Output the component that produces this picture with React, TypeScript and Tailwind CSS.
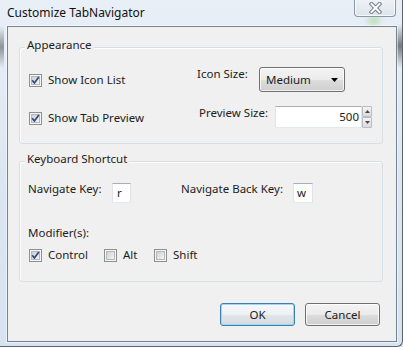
import React from "react";

function Check({ checked }: { checked?: boolean }) {
  return (
    <svg width="13" height="13" viewBox="0 0 13 13" className="shrink-0">
      <defs>
        <linearGradient id="cbg" x1="0" y1="0" x2="1" y2="1">
          <stop offset="0" stopColor="#c9cdd3" />
          <stop offset="1" stopColor="#f8f8f8" />
        </linearGradient>
      </defs>
      <rect x="0.5" y="0.5" width="12" height="12" fill="#f6f6f6" stroke="#8e8f8f" />
      <rect x="2.5" y="2.5" width="8" height="8" fill="url(#cbg)" stroke="#b4b8bd" />
      {checked && (
        <path d="M3.2 6.3 L5.4 9 L9.8 3" fill="none" stroke="#33487a" strokeWidth="1.7" strokeLinejoin="round" />
      )}
    </svg>
  );
}

function CheckItem({ label, checked }: { label: string; checked?: boolean }) {
  return (
    <div className="flex items-center gap-[6px]">
      <Check checked={checked} />
      <span>{label}</span>
    </div>
  );
}

export default function App() {
  return (
    <div className="relative w-[403px] h-[347px] overflow-hidden bg-gradient-to-b from-[#e9eff7] via-[#dce6f2] to-[#d7e3f1] font-['Noto_Sans',sans-serif] text-[11.5px] leading-[16px] text-[#1c1c1c]">
      {/* glass streaks on frame edges */}
      <div className="absolute left-0 top-[26px] w-[4px] h-[42px] bg-gradient-to-b from-transparent via-[#8d939a] to-transparent" />
      <div className="absolute right-0 top-[24px] w-[6px] h-[44px] bg-gradient-to-b from-transparent via-[#737980] to-transparent" />
      <div className="absolute left-[368px] top-[16px] w-[12px] h-[9px] rounded-full bg-[#9ad487] blur-[3px] opacity-60" />

      {/* title bar */}
      <div className="relative flex h-[26px] items-start">
        <div className="pl-[7px] pt-[5px] text-[12px] leading-[16px] text-[#111]">Customize TabNavigator</div>
        <div className="ml-auto mr-[7px] -mt-[2px] flex h-[19px] w-[42px] items-center justify-center rounded-b-[4px] border border-t-0 border-[#8c97a5] bg-gradient-to-b from-[#f1f4f8] to-[#dde4ec] shadow-[inset_0_0_0_1px_rgba(255,255,255,0.7)]">
          <svg width="13" height="12" viewBox="0 0 13 12" className="mt-[1px]">
            <path d="M2.5 2 L10.5 10 M10.5 2 L2.5 10" stroke="#6f7a88" strokeWidth="4" strokeLinecap="square" />
            <path d="M2.5 2 L10.5 10 M10.5 2 L2.5 10" stroke="#ffffff" strokeWidth="2" strokeLinecap="square" />
          </svg>
        </div>
      </div>

      {/* client area */}
      <div className="relative ml-[7px] flex h-[316px] w-[390px] flex-col border border-[#76838f] bg-[#f0f0f0] shadow-[0_0_0_1px_rgba(255,255,255,0.55)]">
        {/* Appearance group */}
        <div className="relative ml-[11px] mt-[20px] h-[97px] w-[364px] rounded-[3px] border border-[#d5dfe5] shadow-[inset_1px_1px_0_#ffffff]">
          <span className="absolute left-[5px] top-[-11px] bg-[#f0f0f0] px-[2px]">Appearance</span>
          <div className="flex flex-col pl-[9px] pt-[19px]">
            <div className="flex h-[25px] items-start">
              <div className="mt-[5px] w-[168px]">
                <CheckItem label="Show Icon List" checked />
              </div>
              <div className="-mt-[1px] w-[62px]">Icon Size:</div>
              <div className="flex h-[25px] w-[86px] items-center justify-between rounded-[3px] border border-[#707070] bg-[linear-gradient(to_bottom,#f3f3f3_0%,#ebebeb_50%,#dddddd_51%,#cfcfcf_100%)] pl-[6px] pr-[6px] shadow-[inset_0_0_0_1px_rgba(255,255,255,0.75)]">
                <span>Medium</span>
                <svg width="7" height="4" viewBox="0 0 7 4">
                  <path d="M0 0 H7 L3.5 4 Z" fill="#000" />
                </svg>
              </div>
            </div>
            <div className="mt-[14px] flex h-[22px] items-start">
              <div className="mt-[4px] w-[170px]">
                <CheckItem label="Show Tab Preview" checked />
              </div>
              <div className="-mt-[1px] w-[76px]">Preview Size:</div>
              <div className="flex h-[22px] w-[87px] items-center justify-end border border-[#abadb3] border-b-[#e3e9ef] border-l-[#e2e3ea] border-r-[#e2e3ea] bg-white pr-[2px]">
                500
              </div>
              <div className="flex h-[22px] w-[10px] flex-col">
                <div className="flex h-[11px] items-center justify-center rounded-[1px] border border-[#b9bcc0] bg-gradient-to-b from-[#f4f4f4] to-[#dcdcdc]">
                  <svg width="5" height="3" viewBox="0 0 5 3">
                    <path d="M0 3 H5 L2.5 0 Z" fill="#4a4a4a" />
                  </svg>
                </div>
                <div className="flex h-[11px] items-center justify-center rounded-[1px] border border-[#b9bcc0] bg-gradient-to-b from-[#f4f4f4] to-[#dcdcdc]">
                  <svg width="5" height="3" viewBox="0 0 5 3">
                    <path d="M0 0 H5 L2.5 3 Z" fill="#4a4a4a" />
                  </svg>
                </div>
              </div>
            </div>
          </div>
        </div>

        {/* Keyboard Shortcut group */}
        <div className="relative ml-[11px] mt-[17px] h-[121px] w-[364px] rounded-[3px] border border-[#d5dfe5] shadow-[inset_1px_1px_0_#ffffff]">
          <span className="absolute left-[5px] top-[-11px] bg-[#f0f0f0] px-[2px]">Keyboard Shortcut</span>
          <div className="flex flex-col pt-[19px]">
            <div className="flex items-start pl-[8px]">
              <div className="w-[84px]">Navigate Key:</div>
              <div className="mt-[2px] flex h-[20px] w-[19px] items-center border border-[#abadb3] border-b-[#e3e9ef] border-l-[#e2e3ea] border-r-[#e2e3ea] bg-white pl-[4px]">
                r
              </div>
              <div className="ml-[50px] w-[112px]">Navigate Back Key:</div>
              <div className="mt-[2px] flex h-[20px] w-[20px] items-center border border-[#abadb3] border-b-[#e3e9ef] border-l-[#e2e3ea] border-r-[#e2e3ea] bg-white pl-[3px]">
                w
              </div>
            </div>
            <div className="mt-[22px] pl-[8px]">Modifier(s):</div>
            <div className="mt-[6px] flex h-[16px] items-center pl-[9px]">
              <div className="w-[75px]">
                <CheckItem label="Control" checked />
              </div>
              <div className="w-[50px]">
                <CheckItem label="Alt" />
              </div>
              <div>
                <CheckItem label="Shift" />
              </div>
            </div>
          </div>
        </div>

        {/* buttons */}
        <div className="mt-[21px] flex justify-end gap-[10px] pr-[16px]">
          <button className="flex h-[23px] w-[75px] items-center justify-center rounded-[3px] border border-[#3c7fb1] bg-[linear-gradient(to_bottom,#f6f8fa_0%,#eef1f4_50%,#e2e6ea_51%,#d6dbe0_100%)] shadow-[inset_0_0_0_1px_#9fd8f5]">
            OK
          </button>
          <button className="flex h-[23px] w-[75px] items-center justify-center rounded-[3px] border border-[#707070] bg-[linear-gradient(to_bottom,#f3f3f3_0%,#ebebeb_50%,#dddddd_51%,#cfcfcf_100%)] shadow-[inset_0_0_0_1px_rgba(255,255,255,0.75)]">
            Cancel
          </button>
        </div>
      </div>

      {/* outer window edge */}
      <div className="pointer-events-none absolute inset-0 rounded-br-[6px] border-b border-r border-[#5b6570]" />
    </div>
  );
}
